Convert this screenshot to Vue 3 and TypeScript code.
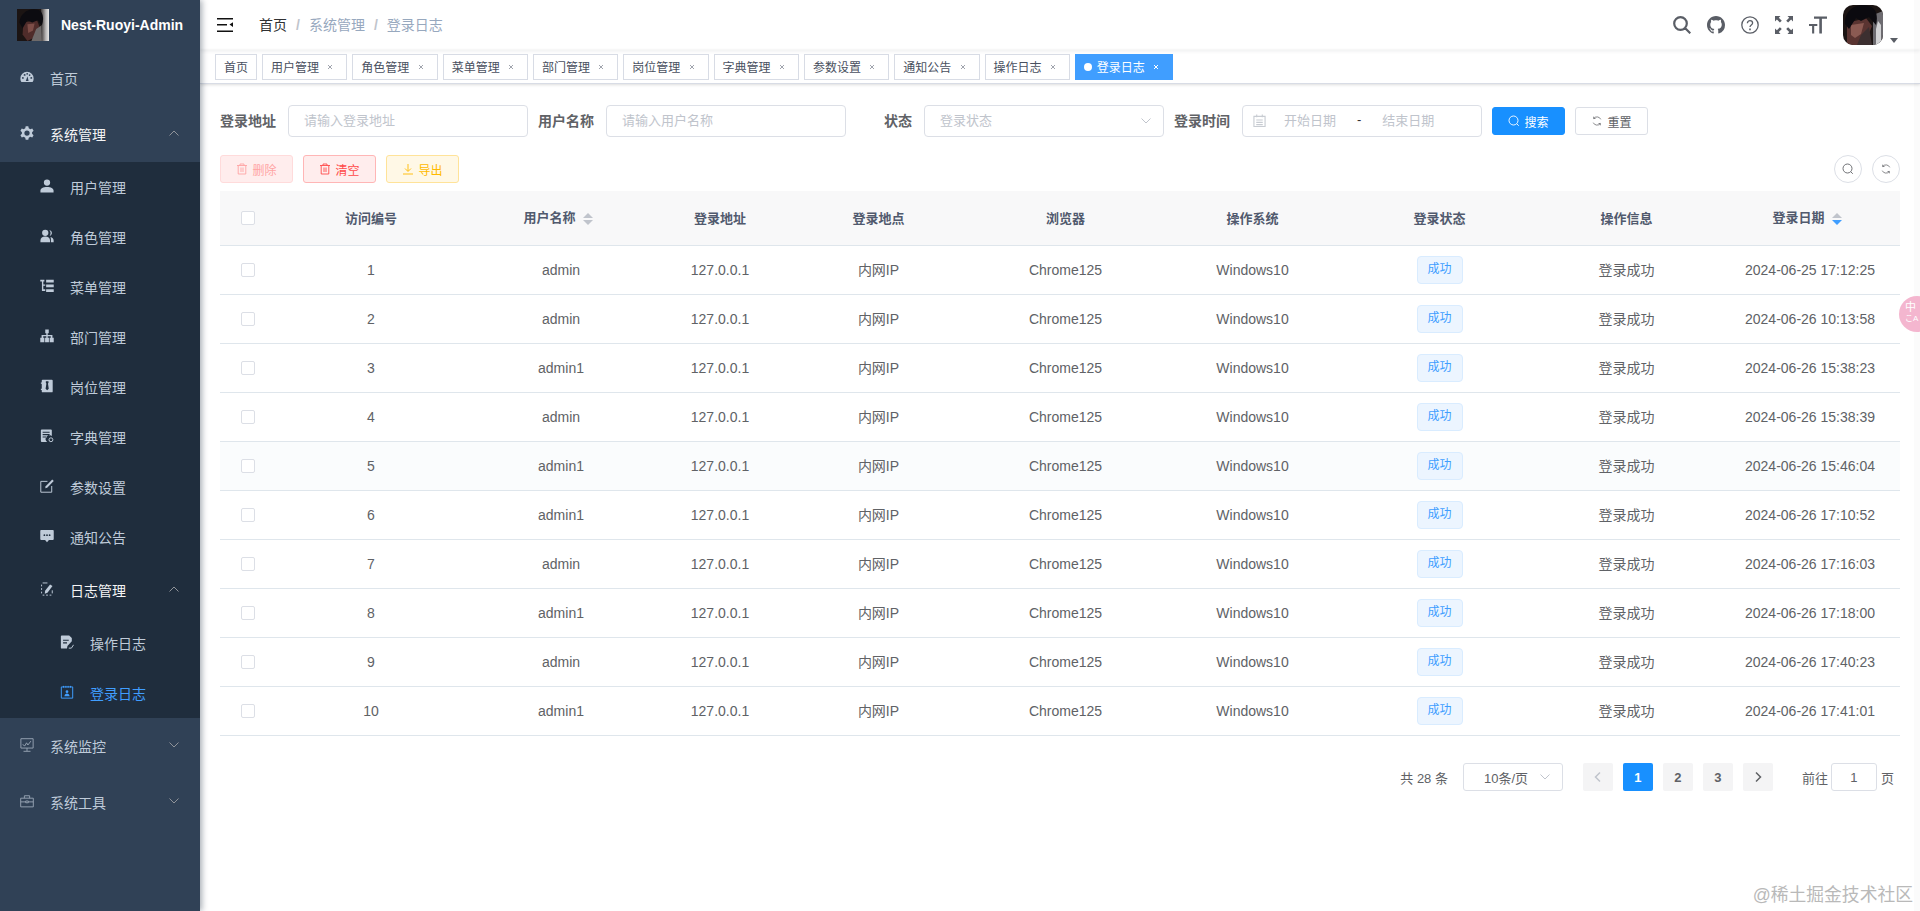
<script setup lang="ts">
interface MenuRow {
  label: string;
  icon: string;
  level: number;
  arrow?: 'up' | 'down';
  open?: boolean;
  active?: boolean;
  dim?: boolean;
}

interface TagItem {
  label: string;
  closable?: boolean;
  active?: boolean;
}

interface LogRow {
  id: number;
  user: string;
  time: string;
}

// f = filled shape, s = outlined shape
const icons: Record<string, { f?: string; s?: string }> = {
  dashboard: {
    f: 'M8 2a7.6 7.6 0 0 0-7.6 7.6c0 1.5.4 2.9 1.2 4h12.8c.8-1.1 1.2-2.5 1.2-4A7.6 7.6 0 0 0 8 2zM2.2 9a1.1 1.1 0 1 0 2.2 0 1.1 1.1 0 1 0-2.2 0zM4.2 5.6a1.1 1.1 0 1 0 2.2 0 1.1 1.1 0 1 0-2.2 0zM7.2 4.4a1 1 0 1 0 2 0 1 1 0 1 0-2 0zM10 5.8a1 1 0 1 0 2 0 1 1 0 1 0-2 0zM11.8 9a1.1 1.1 0 1 0 2.2 0 1.1 1.1 0 1 0-2.2 0zM6.6 12.6l2-5.6 1.2 5.6z',
  },
  system: {
    f: 'M6.5.3h3l.5 2.300 1.800 1 2.200-.7 1.500 2.600-1.700 1.600v1.800l1.700 1.600-1.500 2.600-2.200-.7-1.800 1-.5 2.300h-3l-.5-2.300-1.800-1-2.200.7L.5 10.500l1.700-1.600V7.100L.5 5.500 2 2.900l2.200.7 1.800-1zM8 5a3 3 0 1 0 0 6 3 3 0 0 0 0-6z',
  },
  user: {
    f: 'M8 .5a3.600 3.600 0 1 1 0 7.200A3.600 3.600 0 0 1 8 .5zM.5 15.500v-2.300C.5 10.600 3.500 9 8 9s7.500 1.600 7.500 4.200v2.300z',
  },
  peoples: {
    f: 'M6 .8a3.600 3.600 0 1 1 0 7.200A3.600 3.600 0 0 1 6 .8zM.5 15.200V13c0-2.600 2.300-4.400 5.500-4.400s5.500 1.800 5.500 4.400v2.200zM10.600 1.200c1.800.4 3 1.800 3 3.500 0 1.600-1 2.900-2.600 3.400.7-.9 1.100-2.100 1.100-3.400 0-1.300-.6-2.500-1.500-3.500zM12 9.200c2.100.5 3.600 2 3.600 4v2h-3.100v-2.300c0-1.400-.2-2.600-.5-3.700z',
  },
  tree: {
    f: 'M6 .5h4v4.300H8.800v2h5.400V10h1.500v5H11v-5h1.300V8.300H8.800V10h1.400v5H5.800v-5h1.400V8.300H3.700V10H5v5H.3v-5h1.500V6.800h5.400v-2H6z',
  },
  treeTable: {
    f: 'M.3.800H5v2H3.800v3.400H6v1.600H3.800v3.900H6v2H2.200V2.800H.3zM7 .8h8.700v3.200H7zM7 6.200h8.700v3.200H7zM7 11.600h8.700v3.200H7z',
  },
  post: {
    f: 'M3 .8h10.500c.6 0 1 .4 1 1v12.400c0 .6-.4 1-1 1H3c-.6 0-1-.4-1-1v-1.700H1V11h1V5.500H1V4h1V1.800c0-.6.4-1 1-1zM6.700 2.500v2l.6.6-.9 5.900 1.800 1.800 1.800-1.800-.9-5.900.6-.6v-2z',
  },
  dict: {
    f: 'M2 .5h10.500c.6 0 1 .4 1 1V8a4 4 0 0 0-5.300 6.800H2c-.6 0-1-.4-1-1V1.500c0-.6.4-1 1-1zM3 3v1.200h8V3zM3 5.800V7h8V5.800zM3 8.600v1.200h5V8.600z',
    s: 'M10.300 12.300a2.200 2.200 0 1 0 4.400 0 2.200 2.200 0 1 0-4.400 0z',
  },
  edit: {
    f: 'M14 .5l1.700 1.700-7.500 7.700-2.300.6.600-2.300z',
    s: 'M8.500 2.700H.9v12.400h12.500V8',
  },
  message: {
    f: 'M1.300 1h13.400c.6 0 1 .4 1 1v9.500c0 .6-.4 1-1 1h-4.500L8 15.200l-2.200-2.700H1.300c-.6 0-1-.4-1-1V2c0-.6.4-1 1-1zM4 7a1 1 0 1 0 2 0 1 1 0 1 0-2 0zM7 7a1 1 0 1 0 2 0 1 1 0 1 0-2 0zM10 7a1 1 0 1 0 2 0 1 1 0 1 0-2 0z',
  },
  log: {
    f: 'M11.500 2.800l2.800 1.800-5.800 7.700-3 1 .3-3.200z',
    s: 'M3 1.100h5.500M1.800 3v2M1.800 7v2M1.800 11v2M3 15h2M7 15h2M11 15h2M14 9.500v3.500',
  },
  form: {
    f: 'M2 .5h8.500l3 3V7l-5 5.500-.5 3H2c-.6 0-1-.4-1-1V1.500c0-.6.4-1 1-1zM3.500 5.300v1.400h6.500V5.300zM3.500 8.200v1.400h4.500V8.200z',
    s: 'M10 15h3l2.500-3.800',
  },
  logininfor: {
    f: 'M8 6a1.600 1.600 0 1 1 0 3.200A1.600 1.600 0 0 1 8 6zM5 12.800c.3-1.900 1.400-3 3-3s2.700 1.100 3 3z',
    s: 'M1.500 2.200h13v12.800h-13zM4 1v2M6.700 1v2M9.300 1v2M12 1v2',
  },
  monitor: {
    s: 'M1 .8h14v10.700H1zM8 11.500V15M4 15.200h8M3 7.500l2.500 1.500 2-3.500 1.500 2.500 3.500-4.500',
  },
  tool: {
    s: 'M.8 4.800h14.400v9.900H.8zM5 4.800V2h6v2.800M.8 9h5.700M9.500 9h5.700M6.500 8h3v2h-3z',
  },
};

const menu: MenuRow[] = [
  { label: '首页', icon: 'dashboard', level: 0 },
  { label: '系统管理', icon: 'system', level: 0, arrow: 'up', open: true },
  { label: '用户管理', icon: 'user', level: 1 },
  { label: '角色管理', icon: 'peoples', level: 1 },
  { label: '菜单管理', icon: 'treeTable', level: 1 },
  { label: '部门管理', icon: 'tree', level: 1 },
  { label: '岗位管理', icon: 'post', level: 1 },
  { label: '字典管理', icon: 'dict', level: 1 },
  { label: '参数设置', icon: 'edit', level: 1 },
  { label: '通知公告', icon: 'message', level: 1 },
  { label: '日志管理', icon: 'log', level: 1, arrow: 'up', open: true },
  { label: '操作日志', icon: 'form', level: 2 },
  { label: '登录日志', icon: 'logininfor', level: 2, active: true },
  { label: '系统监控', icon: 'monitor', level: 0, arrow: 'down', dim: true },
  { label: '系统工具', icon: 'tool', level: 0, arrow: 'down', dim: true },
];

const tags: TagItem[] = [
  { label: '首页' },
  { label: '用户管理', closable: true },
  { label: '角色管理', closable: true },
  { label: '菜单管理', closable: true },
  { label: '部门管理', closable: true },
  { label: '岗位管理', closable: true },
  { label: '字典管理', closable: true },
  { label: '参数设置', closable: true },
  { label: '通知公告', closable: true },
  { label: '操作日志', closable: true },
  { label: '登录日志', closable: true, active: true },
];

const columns = ['访问编号', '用户名称', '登录地址', '登录地点', '浏览器', '操作系统', '登录状态', '操作信息', '登录日期'];
const widths = [55, 192, 188, 130, 187, 187, 187, 187, 187, 180];

const rows: LogRow[] = [
  { id: 1, user: 'admin', time: '2024-06-25 17:12:25' },
  { id: 2, user: 'admin', time: '2024-06-26 10:13:58' },
  { id: 3, user: 'admin1', time: '2024-06-26 15:38:23' },
  { id: 4, user: 'admin', time: '2024-06-26 15:38:39' },
  { id: 5, user: 'admin1', time: '2024-06-26 15:46:04' },
  { id: 6, user: 'admin1', time: '2024-06-26 17:10:52' },
  { id: 7, user: 'admin', time: '2024-06-26 17:16:03' },
  { id: 8, user: 'admin1', time: '2024-06-26 17:18:00' },
  { id: 9, user: 'admin', time: '2024-06-26 17:40:23' },
  { id: 10, user: 'admin1', time: '2024-06-26 17:41:01' },
];
</script>

<template>
  <div class="layout">
    <aside class="sidebar">
      <div class="logo">
        <svg class="logo-img" viewBox="0 0 40 40">
          <defs>
            <linearGradient id="strip" x1="0" x2="1" y1="0" y2="0">
              <stop offset="0" stop-color="#3b3636" />
              <stop offset="0.6" stop-color="#b8b6b6" />
              <stop offset="1" stop-color="#e8e8e8" />
            </linearGradient>
          </defs>
          <rect width="40" height="40" fill="#1b1413" />
          <path d="M30 0h10v40H30z" fill="url(#strip)" />
          <path d="M8 17l17-3 3 8-7 14-8 4-6-8z" fill="#4f2c2a" />
          <path d="M13 19l9-1-2 9-6 3z" fill="#7d4d47" />
          <path d="M24 25l6-4 1 19H18z" fill="#6e6a6a" />
          <path d="M3 17C4 5 15-2 26 1c7 2 8 11 5 20l-5-7-7 3-6-3-6 10z" fill="#0c0b10" />
        </svg>
        <span class="logo-title">Nest-Ruoyi-Admin</span>
      </div>
      <ul class="menu">
        <li
          v-for="item in menu"
          :key="item.label"
          :class="['menu-row', 'level' + item.level, { open: item.open, active: item.active, dim: item.dim }]"
        >
          <svg class="menu-icon" viewBox="0 0 16 16">
            <path v-if="icons[item.icon].f" class="ic-fill" :d="icons[item.icon].f" />
            <path v-if="icons[item.icon].s" class="ic-line" :d="icons[item.icon].s" />
          </svg>
          <span>{{ item.label }}</span>
          <svg v-if="item.arrow" class="menu-arrow" viewBox="0 0 10 6">
            <path :d="item.arrow === 'up' ? 'M.5 5.500L5 1l4.500 4.500' : 'M.5.500L5 5l4.500-4.500'" />
          </svg>
        </li>
      </ul>
    </aside>

    <div class="main">
      <header class="navbar">
        <svg class="hamburger" viewBox="0 0 16 14">
          <path d="M0 0h16v1.500H0zM0 6h10v1.500H0zM0 12.500h16V14H0zM16 4.300v4.600l-3.500-2.300z" />
        </svg>
        <div class="breadcrumb">
          <span class="crumb-home">首页</span>
          <span class="crumb-sep">/</span>
          <span class="crumb">系统管理</span>
          <span class="crumb-sep">/</span>
          <span class="crumb">登录日志</span>
        </div>
        <div class="nav-right">
          <svg class="nav-icon" viewBox="0 0 18 18">
            <path class="nav-line thick" d="M1.200 7.500a6.300 6.300 0 1 0 12.600 0 6.300 6.300 0 1 0-12.600 0zM12 12l5.300 5.300" />
          </svg>
          <svg class="nav-icon" viewBox="0 0 16 16">
            <path
              class="nav-fill"
              d="M8 0C3.580 0 0 3.580 0 8c0 3.540 2.290 6.530 5.470 7.590.4.070.55-.17.55-.38 0-.19-.01-.82-.01-1.490-2.010.37-2.530-.49-2.690-.94-.09-.23-.48-.94-.82-1.130-.28-.15-.68-.52-.01-.53.63-.01 1.080.58 1.230.82.720 1.210 1.870.87 2.330.66.070-.52.280-.87.510-1.070-1.780-.2-3.640-.89-3.640-3.950 0-.87.310-1.590.82-2.150-.08-.2-.36-1.020.08-2.120 0 0 .67-.21 2.200.82.640-.18 1.320-.27 2-.27.680 0 1.360.09 2 .27 1.530-1.040 2.200-.82 2.200-.82.440 1.100.160 1.920.080 2.120.510.560.820 1.270.820 2.150 0 3.070-1.870 3.750-3.650 3.950.290.250.540.730.540 1.480 0 1.070-.010 1.930-.010 2.200 0 .210.150.460.550.380A8.013 8.013 0 0 0 16 8c0-4.420-3.580-8-8-8z"
            />
          </svg>
          <svg class="nav-icon" viewBox="0 0 18 18">
            <path class="nav-line" d="M.8 9a8.200 8.200 0 1 0 16.400 0A8.200 8.200 0 1 0 .8 9zM6.400 7.200c0-1.500 1.100-2.600 2.600-2.600s2.600 1 2.600 2.400c0 2-2.600 2-2.600 4" />
            <path class="nav-fill" d="M8.200 12.600h1.600v1.600H8.200z" />
          </svg>
          <svg class="nav-icon" viewBox="0 0 18 18">
            <path class="nav-fill" d="M0 0h5.500L3.800 1.700l3 3-1.900 1.900-3-3L0 5.500zM18 0v5.500l-1.900-1.900-3 3-1.900-1.900 3-3L12.500 0zM0 18v-5.500l1.900 1.700 3-3 1.900 1.900-3 3L5.500 18zM18 18h-5.500l1.700-1.900-3-3 1.900-1.900 3 3 1.900-1.700z" />
          </svg>
          <svg class="nav-icon" viewBox="0 0 18 18">
            <path class="nav-fill" d="M5 .5h13v2.200h-5.100v14.800h-2.600V2.700H5zM0 8h8.300v1.900H5.200v7.600H3.100V9.900H0z" />
          </svg>
          <div class="avatar-wrap">
            <svg class="avatar" viewBox="0 0 40 40">
              <rect width="40" height="40" fill="#1b1413" />
              <path d="M30 10l10-4v34H30z" fill="#6d6b70" />
              <path d="M33 24l2-8 3 4v20h-5z" fill="#d2d2d4" />
              <path d="M4 18l19-5 6 8-6 15-8 4H4z" fill="#5a3431" />
              <path d="M8 20l13-2-3 11-6 4-4-3z" fill="#8b5a52" />
              <path d="M18 30l8-8 3 18H14z" fill="#3c2f30" />
              <path d="M2 19C1 6 13-3 26 1c8 2 9 11 7 19l-7-8-8 4-5-3-7 11z" fill="#0b0a0f" />
            </svg>
            <span class="caret"></span>
          </div>
        </div>
      </header>

      <nav class="tags">
        <span v-for="tag in tags" :key="tag.label" :class="['tag', { 'tag-active': tag.active }]">
          <i v-if="tag.active" class="tag-dot"></i>
          {{ tag.label }}
          <svg v-if="tag.closable" class="tag-close" viewBox="0 0 16 16">
            <path d="M6 6l4 4M10 6l-4 4" />
          </svg>
        </span>
      </nav>

      <section class="content">
        <div class="filter">
          <div class="form-item">
            <label>登录地址</label>
            <div class="input"><span class="ph">请输入登录地址</span></div>
          </div>
          <div class="form-item">
            <label>用户名称</label>
            <div class="input"><span class="ph">请输入用户名称</span></div>
          </div>
          <div class="form-item">
            <label>状态</label>
            <div class="input">
              <span class="ph">登录状态</span>
              <svg class="chevron" viewBox="0 0 10 6"><path d="M.5.500L5 5l4.500-4.500" /></svg>
            </div>
          </div>
          <div class="form-item">
            <label>登录时间</label>
            <div class="input date">
              <svg class="date-icon" viewBox="0 0 14 14">
                <path d="M1 2.500h12v11H1zM4 .5v3M10 .5v3M3.500 6.500h7M3.500 9h7M3.500 11.500h7" />
              </svg>
              <span class="ph date-start">开始日期</span>
              <span class="date-sep">-</span>
              <span class="ph date-end">结束日期</span>
            </div>
          </div>
          <button class="btn primary">
            <svg class="btn-icon" viewBox="0 0 12 12"><path d="M1 5.500a4.500 4.500 0 1 0 9 0 4.500 4.500 0 1 0-9 0zM8.800 8.800l2 2" /></svg>
            搜索
          </button>
          <button class="btn reset">
            <svg class="btn-icon small" viewBox="0 0 12 12"><path d="M10.500 4A5 5 0 0 0 2 3M1.500 8A5 5 0 0 0 10 9M2 .8V3h2.200M10 11.200V9H7.800" /></svg>
            重置
          </button>
        </div>

        <div class="toolbar">
          <button class="btn danger disabled">
            <svg class="btn-icon" viewBox="0 0 12 12"><path d="M1 2.500h10M4 2.500V1h4v1.500M2.200 2.500V11h7.600V2.500M5 4.500v4.500M7 4.500v4.500" /></svg>
            删除
          </button>
          <button class="btn danger">
            <svg class="btn-icon" viewBox="0 0 12 12"><path d="M1 2.500h10M4 2.500V1h4v1.500M2.200 2.500V11h7.600V2.500M5 4.500v4.500M7 4.500v4.500" /></svg>
            清空
          </button>
          <button class="btn warning">
            <svg class="btn-icon" viewBox="0 0 12 12"><path d="M6 1v7M3 5.500L6 8.500l3-3M1 11h10" /></svg>
            导出
          </button>
          <div class="toolbar-right">
            <span class="circle">
              <svg class="btn-icon" viewBox="0 0 12 12"><path d="M1 5.500a4.500 4.500 0 1 0 9 0 4.500 4.500 0 1 0-9 0zM8.800 8.800l2 2" /></svg>
            </span>
            <span class="circle">
              <svg class="btn-icon small" viewBox="0 0 12 12"><path d="M10.500 4A5 5 0 0 0 2 3M1.500 8A5 5 0 0 0 10 9M2 .8V3h2.200M10 11.200V9H7.800" /></svg>
            </span>
          </div>
        </div>

        <table class="table">
          <colgroup>
            <col v-for="(w, i) in widths" :key="i" :style="{ width: w + 'px' }" />
          </colgroup>
          <thead>
            <tr>
              <th><span class="check"></span></th>
              <th v-for="col in columns" :key="col">
                <span :class="{ lifted: col === '用户名称' || col === '登录日期' }">{{ col }}</span>
                <span v-if="col === '用户名称'" class="sort"><i class="up"></i><i class="down"></i></span>
                <span v-if="col === '登录日期'" class="sort desc"><i class="up"></i><i class="down"></i></span>
              </th>
            </tr>
          </thead>
          <tbody>
            <tr v-for="row in rows" :key="row.id" :class="{ hover: row.id === 5 }">
              <td class="up-cell"><span class="check"></span></td>
              <td>{{ row.id }}</td>
              <td>{{ row.user }}</td>
              <td>127.0.0.1</td>
              <td class="up-cell">内网IP</td>
              <td>Chrome125</td>
              <td>Windows10</td>
              <td><span class="status">成功</span></td>
              <td class="up-cell">登录成功</td>
              <td>{{ row.time }}</td>
            </tr>
          </tbody>
        </table>

        <div class="pagination">
          <span class="total">共 28 条</span>
          <div class="page-size">
            <span>10条/页</span>
            <svg class="chevron" viewBox="0 0 10 6"><path d="M.5.500L5 5l4.500-4.500" /></svg>
          </div>
          <span class="page-btn prev disabled">
            <svg viewBox="0 0 8 12"><path d="M6 1.500L1.500 6 6 10.500" /></svg>
          </span>
          <span class="page-btn current">1</span>
          <span class="page-btn">2</span>
          <span class="page-btn">3</span>
          <span class="page-btn next">
            <svg viewBox="0 0 8 12"><path d="M2 1.500L6.500 6 2 10.500" /></svg>
          </span>
          <span class="goto">前往</span>
          <span class="goto-input">1</span>
          <span class="goto-end">页</span>
        </div>
      </section>
    </div>

    <div class="translate-ball"><span>中</span><span class="ball-sub">こA</span></div>
    <div class="watermark">@稀土掘金技术社区</div>
  </div>
</template>

<style>
html,
body {
  margin: 0;
  height: 100%;
  overflow: hidden;
  background: #fff;
}
</style>

<style scoped>
.layout {
  position: relative;
  display: flex;
  height: 911px;
  overflow: hidden;
  font-family: 'Liberation Sans', 'Noto Sans CJK SC', sans-serif;
  font-size: 14px;
  color: #606266;
}

/* very faint strip along the right edge of the page */
.layout::after {
  content: '';
  position: absolute;
  top: 0;
  right: 0;
  bottom: 0;
  width: 6px;
  background: rgba(0, 0, 0, 0.015);
}

.sidebar {
  flex: 0 0 200px;
  background: #304156;
  box-shadow: 2px 0 6px rgba(0, 21, 41, 0.35);
  z-index: 2;
}

.logo {
  display: flex;
  align-items: center;
  height: 50px;
  padding-left: 17px;
  box-sizing: border-box;
}

.logo-img {
  width: 32px;
  height: 32px;
  margin-right: 12px;
}

.logo-title {
  font-size: 14px;
  font-weight: 700;
  color: #fff;
}

.menu {
  list-style: none;
  margin: 0;
  padding: 0;
}

.menu-row {
  position: relative;
  display: flex;
  align-items: center;
  height: 56px;
  color: #bfcbd9;
}

.level0 {
  padding-left: 20px;
}

.level1 {
  height: 50px;
  padding-left: 40px;
  background: #1f2d3d;
}

.level2 {
  height: 50px;
  padding-left: 60px;
  background: #1f2d3d;
}

.level1.open {
  height: 56px;
}

.open {
  color: #f4f4f5;
}

.active {
  color: #409eff;
}

.menu-icon {
  flex: none;
  width: 14px;
  height: 14px;
  margin-right: 16px;
  margin-top: -3px;
}

.dim .menu-icon {
  opacity: 0.7;
}

.ic-fill {
  fill: currentColor;
  fill-rule: evenodd;
}

.ic-line {
  fill: none;
  stroke: currentColor;
  stroke-width: 1.1;
}

.menu-row:not(.active) .menu-icon {
  color: #bfcbd9;
}

.menu-arrow {
  position: absolute;
  right: 21px;
  top: 50%;
  width: 10px;
  height: 6px;
  margin-top: -4px;
  fill: none;
  stroke: #909399;
  stroke-width: 1;
}

.main {
  flex: 1;
  min-width: 0;
}

.navbar {
  display: flex;
  align-items: center;
  height: 50px;
  box-shadow: 0 1px 4px rgba(0, 21, 41, 0.08);
  position: relative;
}

.hamburger {
  width: 16px;
  height: 14px;
  margin-left: 17px;
  fill: #111;
}

.breadcrumb {
  margin-left: 26px;
  padding-bottom: 2px;
  font-size: 14px;
  color: #97a8be;
}

.crumb-home {
  color: #303133;
}

.crumb-sep {
  margin: 0 9px;
  color: #c0c4cc;
  font-weight: 700;
}

.nav-right {
  display: flex;
  align-items: center;
  gap: 16px;
  margin-left: auto;
  padding-right: 17px;
}

.nav-icon {
  width: 18px;
  height: 18px;
}

.nav-fill {
  fill: #5a5e66;
}

.nav-line {
  fill: none;
  stroke: #5a5e66;
  stroke-width: 1.3;
}

.nav-line.thick {
  stroke-width: 2.2;
}

.avatar-wrap {
  position: relative;
  display: flex;
  align-items: center;
  padding-right: 20px;
}

.avatar {
  width: 40px;
  height: 40px;
  border-radius: 10px;
}

.caret {
  position: absolute;
  right: 5px;
  top: 33px;
  border-left: 4.5px solid transparent;
  border-right: 4.5px solid transparent;
  border-top: 5px solid #5a5e66;
}

.tags {
  display: flex;
  align-items: center;
  gap: 5px;
  height: 34px;
  padding-left: 15px;
  box-sizing: border-box;
  border-bottom: 1px solid #d8dce5;
  box-shadow: 0 1px 3px 0 rgba(0, 0, 0, 0.12), 0 0 3px 0 rgba(0, 0, 0, 0.04);
}

.tag {
  display: inline-flex;
  align-items: center;
  height: 26px;
  padding: 0 8px;
  box-sizing: border-box;
  border: 1px solid #d8dce5;
  font-size: 12px;
  color: #495060;
  background: #fff;
}

.tag-active {
  background: #409eff;
  border-color: #409eff;
  color: #fff;
}

.tag-dot {
  width: 8px;
  height: 8px;
  margin-right: 5px;
  border-radius: 50%;
  background: #fff;
}

.tag-close {
  width: 16px;
  height: 16px;
  margin-left: 3.3px;
  fill: none;
  stroke: #a0a4ad;
  stroke-width: 1;
}

.tag-active .tag-close {
  stroke: #fff;
}

.content {
  padding: 21px 20px 0;
}

.filter {
  display: flex;
  align-items: center;
  height: 32px;
  margin-bottom: 18px;
}

.form-item {
  display: flex;
  align-items: center;
  margin-right: 10px;
}

.form-item label {
  width: 68px;
  padding-right: 12px;
  padding-bottom: 3px;
  box-sizing: border-box;
  text-align: right;
  font-weight: 700;
  white-space: nowrap;
}

.input {
  position: relative;
  display: flex;
  align-items: center;
  width: 240px;
  height: 32px;
  padding-left: 15px;
  padding-bottom: 3px;
  box-sizing: border-box;
  border: 1px solid #dcdfe6;
  border-radius: 4px;
  font-size: 13px;
}

.ph {
  color: #c0c4cc;
}

.chevron {
  position: absolute;
  right: 12px;
  top: 50%;
  width: 10px;
  height: 6px;
  margin-top: -3px;
  fill: none;
  stroke: #c0c4cc;
  stroke-width: 1;
}

.date {
  padding-left: 10px;
}

.date-icon {
  width: 13px;
  height: 13px;
  margin-top: 2px;
  fill: none;
  stroke: #c8ccd2;
  stroke-width: 1.2;
}

.date-start {
  margin-left: 18px;
}

.date-sep {
  margin-left: 21px;
  color: #303133;
}

.date-end {
  margin-left: 21px;
}

.btn {
  display: inline-flex;
  align-items: center;
  justify-content: center;
  gap: 4px;
  height: 28px;
  width: 73px;
  padding: 0;
  box-sizing: border-box;
  border: 1px solid #dcdfe6;
  border-radius: 3px;
  background: #fff;
  font-family: inherit;
  font-size: 12px;
  color: #606266;
}

.btn-icon {
  width: 12px;
  height: 12px;
  fill: none;
  stroke: currentColor;
  stroke-width: 0.9;
}

.btn-icon.small {
  width: 10px;
  height: 10px;
  margin: 0 1px;
}

.primary {
  background: #1890ff;
  border-color: #1890ff;
  color: #fff;
}

.reset {
  margin-left: 10px;
}

.toolbar {
  display: flex;
  align-items: center;
  gap: 10px;
  height: 28px;
  margin-bottom: 8px;
}

.danger {
  background: #ffeded;
  border-color: #ffb6b6;
  color: #ff4949;
}

.danger.disabled {
  border-color: #ffdbdb;
  color: #ffa4a4;
}

.warning {
  background: #fff8e6;
  border-color: #ffe399;
  color: #ffba00;
}

.toolbar-right {
  display: flex;
  gap: 10px;
  margin-left: auto;
}

.circle {
  display: flex;
  align-items: center;
  justify-content: center;
  width: 28px;
  height: 28px;
  box-sizing: border-box;
  border: 1px solid #dcdfe6;
  border-radius: 50%;
  color: #606266;
}

.table {
  width: 1680px;
  table-layout: fixed;
  border-collapse: separate;
  border-spacing: 0;
}

.table th {
  height: 55px;
  padding: 0 0 2px;
  box-sizing: border-box;
  background: #f8f8f9;
  border-bottom: 1px solid #dfe6ec;
  font-size: 13px;
  font-weight: 700;
  color: #515a6e;
  text-align: center;
}

.table td {
  height: 49px;
  padding: 0;
  box-sizing: border-box;
  border-bottom: 1px solid #dfe6ec;
  text-align: center;
  font-size: 14px;
  color: #606266;
}

.table td.up-cell {
  padding-bottom: 2px;
}

.hover td {
  background: #fafcfd;
}

.lifted {
  position: relative;
  top: -1px;
}

.check {
  display: inline-block;
  width: 14px;
  height: 14px;
  box-sizing: border-box;
  border: 1px solid #dcdfe6;
  border-radius: 2px;
  background: #fff;
  vertical-align: middle;
}

.sort {
  display: inline-flex;
  flex-direction: column;
  gap: 2px;
  margin-left: 7px;
  margin-right: 6px;
  vertical-align: middle;
}

.sort i {
  width: 0;
  height: 0;
  border-left: 5px solid transparent;
  border-right: 5px solid transparent;
}

.sort .up {
  border-bottom: 5px solid #c0c4cc;
}

.sort .down {
  border-top: 5px solid #c0c4cc;
}

.sort.desc .down {
  border-top-color: #409eff;
}

.status {
  display: inline-block;
  width: 46px;
  height: 28px;
  line-height: 25px;
  box-sizing: border-box;
  border: 1px solid #d9ecff;
  border-radius: 4px;
  background: #ecf5ff;
  font-size: 12px;
  color: #409eff;
  vertical-align: middle;
}

.pagination {
  display: flex;
  align-items: center;
  justify-content: flex-end;
  height: 28px;
  margin-top: 27px;
  padding-right: 6px;
  font-size: 13px;
}

.page-size {
  position: relative;
  display: flex;
  align-items: center;
  width: 100px;
  height: 28px;
  margin-left: 15px;
  margin-right: 20px;
  padding-left: 20px;
  box-sizing: border-box;
  border: 1px solid #dcdfe6;
  border-radius: 3px;
}

.page-btn {
  display: flex;
  align-items: center;
  justify-content: center;
  width: 30px;
  height: 28px;
  margin-right: 10px;
  border-radius: 2px;
  background: #f4f4f5;
  font-weight: 700;
  color: #606266;
}

.page-btn svg {
  width: 8px;
  height: 12px;
  fill: none;
  stroke: #606266;
  stroke-width: 1.5;
}

.page-btn.disabled svg {
  stroke: #c0c4cc;
}

.current {
  background: #1890ff;
  color: #fff;
}

.next {
  margin-right: 29px;
}

.goto-input {
  display: flex;
  align-items: center;
  justify-content: center;
  width: 46px;
  height: 28px;
  margin: 0 4px 0 3px;
  box-sizing: border-box;
  border: 1px solid #dcdfe6;
  border-radius: 3px;
}

.translate-ball {
  position: absolute;
  right: -15px;
  top: 296px;
  display: flex;
  flex-direction: column;
  align-items: flex-start;
  width: 36px;
  height: 36px;
  padding: 5px 0 0 6px;
  box-sizing: border-box;
  border-radius: 50%;
  background: #f4b6cf;
  font-size: 11px;
  line-height: 12px;
  color: #fff;
  white-space: nowrap;
  z-index: 3;
}

.ball-sub {
  font-size: 8px;
}

.watermark {
  position: absolute;
  right: 7px;
  bottom: 5px;
  font-size: 17.8px;
  color: #b9b9b9;
  z-index: 3;
}
</style>
